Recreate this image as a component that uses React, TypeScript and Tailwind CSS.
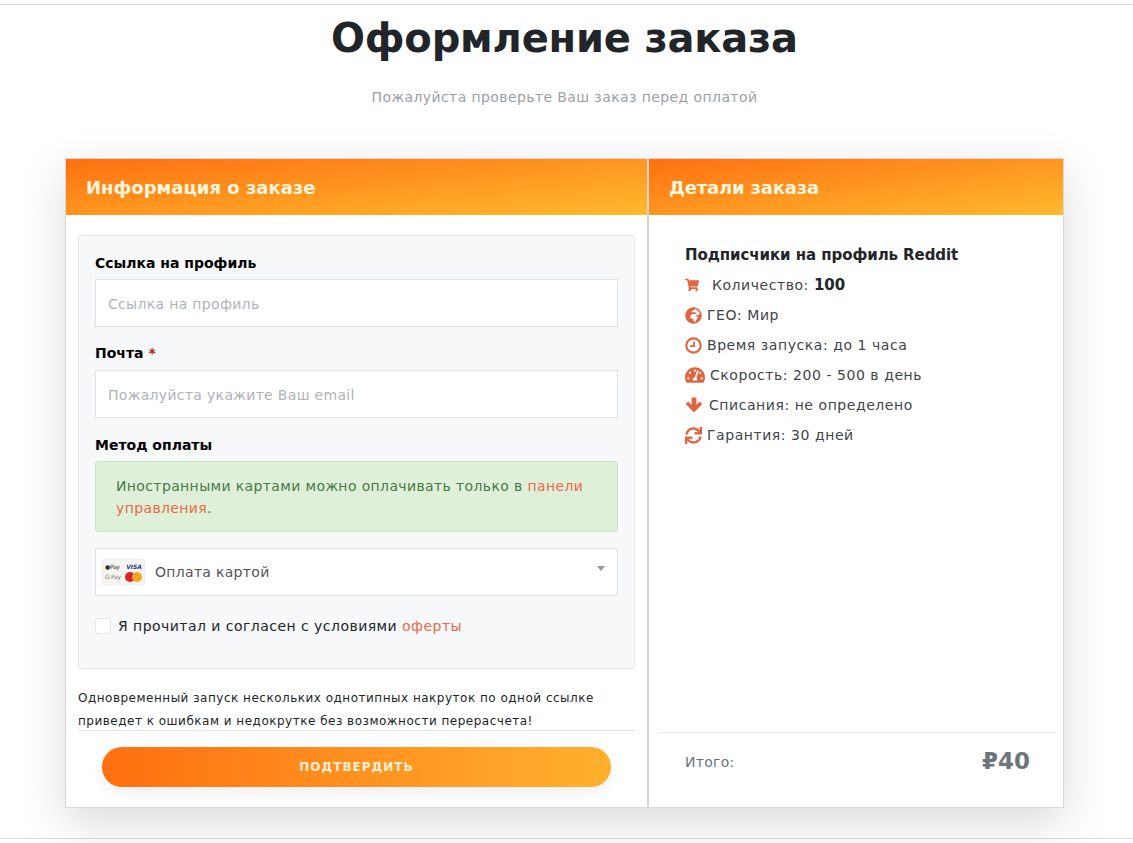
import { FaShoppingCart, FaGlobeAfrica, FaTachometerAlt, FaSync } from "react-icons/fa";

const font = "font-['DejaVu_Sans',Verdana,sans-serif]";

function PayLogo() {
  return (
    <div className="w-[41px] h-[24px] shrink-0 bg-[#f6f4ee] shadow-[0_0_2px_#ccc] flex flex-col justify-center px-[2px] text-[6px] leading-[10px]">
      <div className="flex justify-between items-center">
        <span className="text-[#333] tracking-tighter">●Pay</span>
        <span className="text-[#1a3a8f] font-bold italic">VISA</span>
      </div>
      <div className="flex justify-between items-center">
        <span className="text-[#777] tracking-tighter">G Pay</span>
        <span className="flex">
          <span className="w-[10px] h-[10px] rounded-full bg-[#d8232a]" />
          <span className="w-[10px] h-[10px] rounded-full bg-[#f5a623] -ml-[3px]" />
        </span>
      </div>
    </div>
  );
}

function ClockIcon() {
  return (
    <svg width="17" height="17" viewBox="0 0 17 17" fill="none" stroke="currentColor">
      <circle cx="8.5" cy="8.5" r="7.2" strokeWidth="2.2" />
      <path d="M9 4.5V9.2H5" strokeWidth="1.8" />
    </svg>
  );
}

function ArrowIcon() {
  return (
    <svg width="18" height="18" viewBox="0 0 18 18" fill="currentColor">
      <path d="M6.6 1.5h4.8v7.2l3.3-3.3 2.6 2.6L9 16.4 0.7 8 3.3 5.4l3.3 3.3z" />
    </svg>
  );
}

const details = [
  { icon: <FaShoppingCart size={14} />, gap: "gap-[13px]", text: "Количество: ", bold: "100" },
  { icon: <FaGlobeAfrica size={17} />, gap: "gap-[5px]", text: "ГЕО: Мир" },
  { icon: <ClockIcon />, gap: "gap-[5px]", text: "Время запуска: до 1 часа" },
  { icon: <FaTachometerAlt size={20} />, gap: "gap-[5px]", text: "Скорость: 200 - 500 в день" },
  { icon: <ArrowIcon />, gap: "gap-[6px]", text: "Списания: не определено" },
  { icon: <FaSync size={17} />, gap: "gap-[5px]", text: "Гарантия: 30 дней" },
];

export default function App() {
  return (
    <div className={`${font} h-[843px] overflow-hidden bg-white pt-1`}>
      <div className="h-[835px] border-y border-[#dcdcdc] flex flex-col items-center pr-1">
        <h1 className="mt-[8px] text-[40px] leading-[50px] tracking-[-0.2px] font-bold text-[#212529]">Оформление заказа</h1>
        <p className="mt-[25px] text-sm leading-[18px] tracking-[0.4px] text-[#9a9fa8]">Пожалуйста проверьте Ваш заказ перед оплатой</p>

        <div className="mt-[52px] w-[999px] h-[650px] flex border border-[#d8d8d8] bg-white shadow-[0_15px_45px_rgba(0,0,0,0.15)]">
          <div className="w-[581px] flex flex-col border-r-2 border-[#d5d5d5] box-content">
            <div className="h-[56px] flex items-center px-5 bg-gradient-to-br from-[#ff6f0f] to-[#ffb92e]">
              <h2 className="text-[18px] font-bold text-[#fff4dc]">Информация о заказе</h2>
            </div>

            <div className="mx-3 mt-5 h-[434px] rounded-[3px] border border-[#e8eaee] bg-[#f7f8fa] px-4 pt-[17px]">
              <label className="block text-sm leading-[20px] font-bold text-black">Ссылка на профиль</label>
              <input
                placeholder="Ссылка на профиль"
                className="mt-[6px] w-full h-12 px-3 pt-[2px] text-sm tracking-[0.32px] bg-white border border-[#dfe1e5] outline-none placeholder:text-[#b0b3b8]"
              />

              <label className="block mt-4 text-sm leading-[20px] font-bold text-black">
                Почта <span className="text-[#b51c1c]">*</span>
              </label>
              <input
                placeholder="Пожалуйста укажите Ваш email"
                className="mt-[7px] w-full h-12 px-3 pt-[2px] text-sm tracking-[0.32px] bg-white border border-[#dfe1e5] outline-none placeholder:text-[#b0b3b8]"
              />

              <label className="block mt-[17px] text-sm leading-[20px] font-bold text-black">Метод оплаты</label>
              <div className="mt-[6px] h-[71px] rounded-[3px] border border-[#c9e3c4] bg-[#dff0d8] px-5 py-[13px] text-sm leading-[22px] tracking-[0.37px] text-[#467a47]">
                <span>Иностранными картами можно оплачивать только в </span>
                <span className="text-[#e8694a]">панели</span>
                <br />
                <span className="text-[#e8694a]">управления</span>.
              </div>

              <div className="mt-4 h-12 flex items-center gap-[11px] px-[7px] bg-white border border-[#dfe1e5] relative">
                <PayLogo />
                <span className="text-sm tracking-[0.3px] text-[#555]">Оплата картой</span>
                <span className="absolute right-[12px] top-[17px] border-x-4 border-t-[5px] border-x-transparent border-t-[#999]" />
              </div>

              <div className="mt-5 flex items-center gap-[7px] text-sm tracking-[0.46px]">
                <span className="w-4 h-4 rounded-[3px] border border-[#e4e6ea] bg-white" />
                <span className="text-[#212529]">
                  Я прочитал и согласен с условиями <span className="text-[#e8694a]">оферты</span>
                </span>
              </div>
            </div>

            <p className="mx-3 mt-[18px] h-[44px] text-xs leading-[23px] tracking-[0.5px] text-[#212529] border-b border-[#e4e4e4]">
              Одновременный запуск нескольких однотипных накруток по одной ссылке<br />
              приведет к ошибкам и недокрутке без возможности перерасчета!
            </p>
            <button className="mx-9 mt-4 h-10 rounded-full bg-gradient-to-r from-[#ff6f0f] to-[#ffb02e] text-xs font-bold tracking-[1px] text-[#fff1d8] shadow-[0_4px_14px_rgba(0,0,0,0.08)]">
              ПОДТВЕРДИТЬ
            </button>
          </div>

          <div className="flex-1 flex flex-col">
            <div className="h-[56px] flex items-center px-5 bg-gradient-to-br from-[#ff6f0f] to-[#ffb92e]">
              <h2 className="text-[18px] font-bold tracking-[-0.2px] text-[#fff4dc]">Детали заказа</h2>
            </div>
            <div className="flex-1 pl-9 pt-[25px]">
              <div className="h-[30px] text-[15px] leading-[30px] tracking-[-0.07px] font-bold text-[#212529]">Подписчики на профиль Reddit</div>
              {details.map((d) => (
                <div key={d.text} className={`h-[30px] flex items-center ${d.gap} text-sm tracking-[0.55px] text-[#3f444a]`}>
                  <span className="text-[#e2653f]">{d.icon}</span>
                  <span>
                    {d.text}
                    {d.bold && <b className="text-[15px] leading-[14px] tracking-normal text-[#212529]">{d.bold}</b>}
                  </span>
                </div>
              ))}
            </div>
            <div className="ml-[10px] mr-[7px] h-[75px] border-t border-[#e4e4e4] flex items-center justify-between pb-[17px] pl-[26px] pr-[26px]">
              <span className="text-sm tracking-[0.3px] text-[#6c757d]">Итого:</span>
              <span className="text-[23px] font-bold text-[#6c757d]">₽40</span>
            </div>
          </div>
        </div>
      </div>
    </div>
  );
}
